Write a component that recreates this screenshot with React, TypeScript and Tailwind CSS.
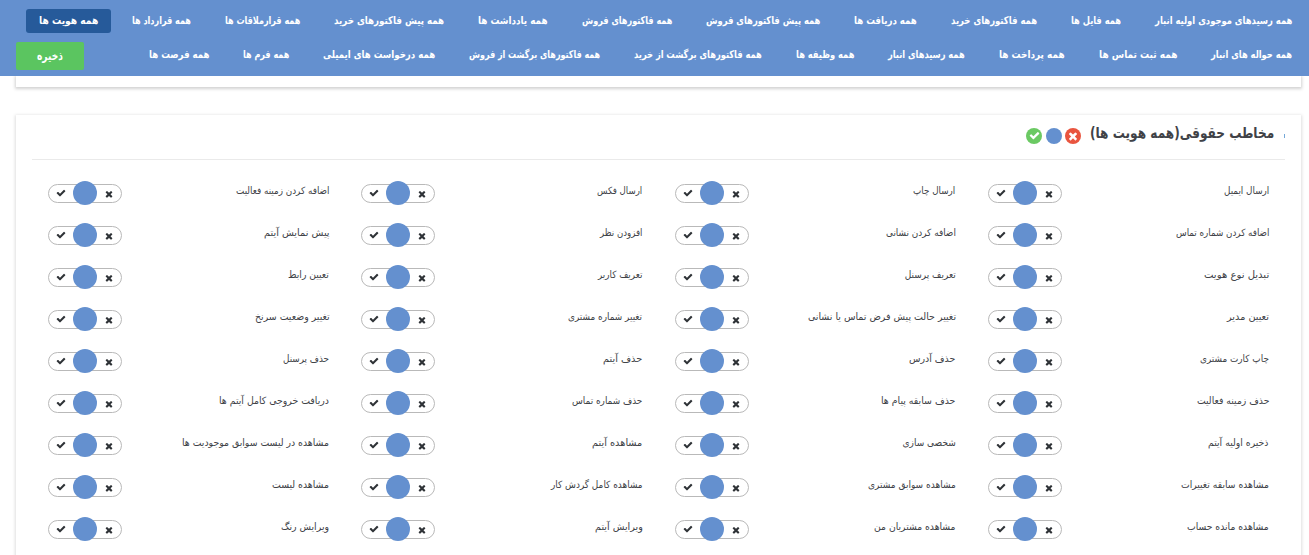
import { useLayoutEffect, useRef, useState } from "react";

type Item = [text: string, width: number];

const navTop: Item[] = [
  ["همه رسیدهای موجودی اولیه انبار", 137],
  ["همه فایل ها", 50],
  ["همه فاکتورهای خرید", 86],
  ["همه دریافت ها", 63],
  ["همه پیش فاکتورهای فروش", 114],
  ["همه فاکتورهای فروش", 90],
  ["همه یادداشت ها", 70],
  ["همه پیش فاکتورهای خرید", 110],
  ["همه قرارملاقات ها", 75],
  ["همه قرارداد ها", 59],
  ["همه هویت ها", 59],
];

const navBottom: Item[] = [
  ["همه حواله های انبار", 81],
  ["همه ثبت تماس ها", 78],
  ["همه پرداخت ها", 66],
  ["همه رسیدهای انبار", 77],
  ["همه وظیفه ها", 58],
  ["همه فاکتورهای برگشت از خرید", 128],
  ["همه فاکتورهای برگشت از فروش", 131],
  ["همه درخواست های ایمیلی", 112],
  ["همه فرم ها", 46],
  ["همه فرصت ها", 60],
];

const permissions: Item[] = [
  ["ارسال ایمیل", 45],
  ["ارسال چاپ", 42],
  ["ارسال فکس", 45],
  ["اضافه کردن زمینه فعالیت", 94],
  ["اضافه کردن شماره تماس", 93],
  ["اضافه کردن نشانی", 70],
  ["افزودن نظر", 42],
  ["پیش نمایش آیتم", 66],
  ["تبدیل نوع هویت", 65],
  ["تعریف پرسنل", 51],
  ["تعریف کاربر", 44],
  ["تعیین رابط", 41],
  ["تعیین مدیر", 42],
  ["تغییر حالت پیش فرض تماس یا نشانی", 148],
  ["تغییر شماره مشتری", 74],
  ["تغییر وضعیت سرنخ", 75],
  ["چاپ کارت مشتری", 69],
  ["حذف آدرس", 46],
  ["حذف آیتم", 39],
  ["حذف پرسنل", 46],
  ["حذف زمینه فعالیت", 72],
  ["حذف سابقه پیام ها", 74],
  ["حذف شماره تماس", 70],
  ["دریافت خروجی کامل آیتم ها", 110],
  ["ذخیره اولیه آیتم", 61],
  ["شخصی سازی", 53],
  ["مشاهده آیتم", 50],
  ["مشاهده در لیست سوابق موجودیت ها", 147],
  ["مشاهده سابقه تغییرات", 88],
  ["مشاهده سوابق مشتری", 88],
  ["مشاهده کامل گردش کار", 92],
  ["مشاهده لیست", 57],
  ["مشاهده مانده حساب", 82],
  ["مشاهده مشتریان من", 82],
  ["ویرایش آیتم", 48],
  ["ویرایش رنگ", 48],
];

// Condenses a single line of text so that it fills the given width.
function FitText({ text, width }: { text: string; width: number }) {
  const ref = useRef<HTMLSpanElement>(null);
  const [scale, setScale] = useState(1);
  useLayoutEffect(() => {
    if (ref.current) setScale(width / ref.current.offsetWidth);
  }, [text, width]);
  return (
    <span className="flex shrink-0 justify-start" style={{ width }}>
      <span
        ref={ref}
        className="inline-block shrink-0 origin-right whitespace-nowrap"
        style={{ transform: `scaleX(${scale})` }}
      >
        {text}
      </span>
    </span>
  );
}

function Check({ className }: { className: string }) {
  return (
    <svg viewBox="0 0 1792 1792" fill="currentColor" className={className}>
      <path d="M1671 566q0 40-28 68l-724 724-136 136q-28 28-68 28t-68-28l-136-136-362-362q-28-28-28-68t28-68l136-136q28-28 68-28t68 28l294 295 656-657q28-28 68-28t68 28l136 136q28 28 28 68z" />
    </svg>
  );
}

function Times({ className }: { className: string }) {
  return (
    <svg viewBox="0 0 1792 1792" fill="currentColor" className={className}>
      <path d="M1490 1322q0 40-28 68l-136 136q-28 28-68 28t-68-28l-294-294-294 294q-28 28-68 28t-68-28l-136-136q-28-28-28-68t28-68l294-294-294-294q-28-28-28-68t28-68l136-136q28-28 68-28t68 28l294 294 294-294q28-28 68-28t68 28l136 136q28 28 28 68t-28 68l-294 294 294 294q28 28 28 68z" />
    </svg>
  );
}

function NavItem({ item, active }: { item: Item; active?: boolean }) {
  return (
    <a
      className={
        active
          ? "flex h-6 items-center rounded-[3px] bg-[#265a9a] px-[13px]"
          : "flex h-6 items-center rounded-[3px] px-[13px]"
      }
    >
      <FitText text={item[0]} width={item[1]} />
    </a>
  );
}

function Toggle() {
  return (
    <div className="flex h-[19px] w-[74px] items-center justify-between rounded-full border border-[#b9b9b9] px-[7px] text-[#2f3337]">
      <Times className="mt-px size-[10px]" />
      <span className="-my-1 size-6 shrink-0 rounded-full bg-[#6490cf]" />
      <Check className="size-[10px]" />
    </div>
  );
}

export default function App() {
  return (
    <div
      dir="rtl"
      className="h-[555px] w-[1309px] overflow-hidden bg-white font-['DejaVu_Sans_Condensed','DejaVu_Sans',sans-serif] text-[#404247]"
    >
      <header className="relative flex h-[76px] flex-col bg-[#6490cf] pt-[9px] pr-1 pl-4 text-[10.5px] font-bold text-white">
        <nav className="flex gap-2">
          {navTop.map((item, i) => (
            <NavItem key={item[0]} item={item} active={i === navTop.length - 1} />
          ))}
        </nav>
        <div className="mt-[9px] flex items-center justify-between">
          <nav className="flex gap-2 pb-[2px]">
            {navBottom.map((item) => (
              <NavItem key={item[0]} item={item} />
            ))}
          </nav>
          <button className="flex h-7 w-[68px] items-center justify-center rounded-[2px] bg-[#5bc560] text-[12px]">
            <FitText text="ذخیره" width={26} />
          </button>
        </div>
      </header>

      <main className="flex flex-col gap-7 pr-2 pl-4">
        <section className="h-[11px] bg-white shadow-[0_1px_3px_1px_rgba(0,0,0,0.18)] [clip-path:inset(0_-6px_-6px_-6px)]" />
        <section className="h-[460px] bg-white px-4 shadow-[0_1px_3px_1px_rgba(0,0,0,0.13)]">
          <div className="flex h-[45px] items-start border-b border-[#eaeaea]">
            <span className="mt-[19px] h-1 w-px bg-[#75a8d8]" />
            <h2 className="mt-[6px] mr-[10px] flex h-6 items-center text-[15px] font-bold">
              <FitText text="مخاطب حقوقی(همه هویت ها)" width={184} />
            </h2>
            <div className="mt-[13px] mr-[9px] flex gap-[3.5px] text-white">
              <span className="flex size-4 items-center justify-center rounded-full bg-[#e9553f]">
                <Times className="mb-px size-3" />
              </span>
              <span className="size-4 rounded-full bg-[#6490cf]" />
              <span className="flex size-4 items-center justify-center rounded-full bg-[#6bc963]">
                <Check className="mb-px size-[11px]" />
              </span>
            </div>
          </div>
          <div className="grid auto-rows-[42px] grid-cols-4 pt-[12px] text-[10px]">
            {permissions.map((item) => (
              <div key={item[0]} className="flex items-center justify-between px-4">
                <span className="-mt-[5px]">
                  <FitText text={item[0]} width={item[1]} />
                </span>
                <Toggle />
              </div>
            ))}
          </div>
        </section>
      </main>
    </div>
  );
}
